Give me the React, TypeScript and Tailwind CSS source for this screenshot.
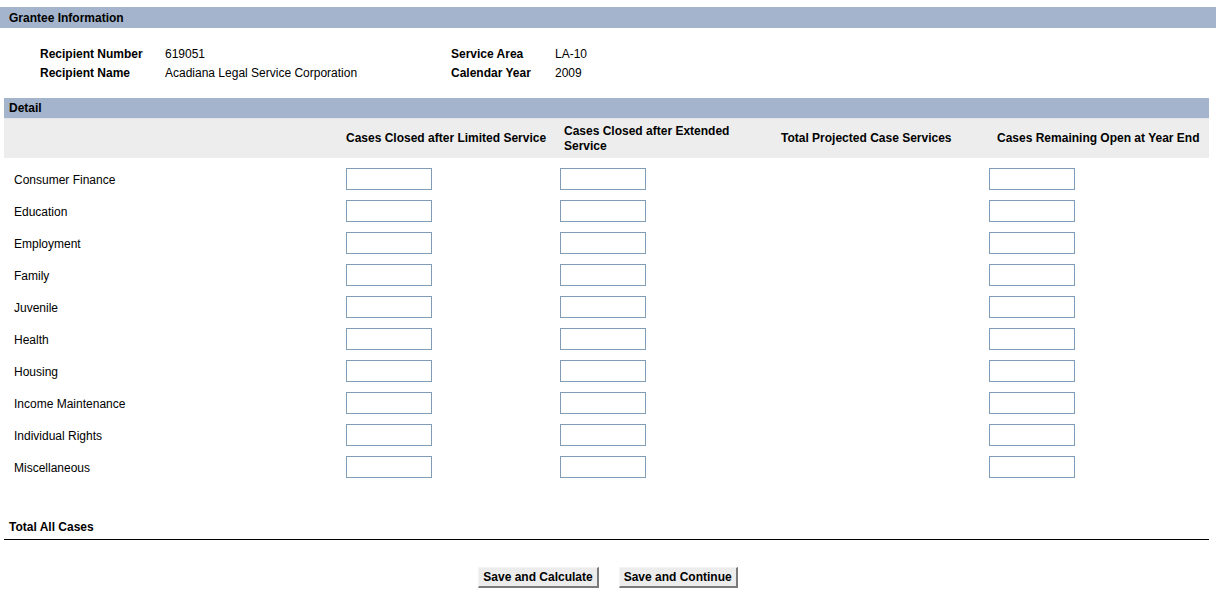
const rows = [
  "Consumer Finance",
  "Education",
  "Employment",
  "Family",
  "Juvenile",
  "Health",
  "Housing",
  "Income Maintenance",
  "Individual Rights",
  "Miscellaneous",
];

const Box = () => (
  <input
    type="text"
    className="w-[86px] h-[22px] border border-[#7f9db9] bg-white outline-none"
  />
);

const Btn = ({ label }: { label: string }) => (
  <button className="h-[21px] px-[4px] bg-[#ececec] border border-t-[#f4f4f4] border-l-[#f4f4f4] border-b-[#7a7a7a] border-r-[#7a7a7a] border-b-2 border-r-2 font-bold text-[12px] text-black leading-none">
    {label}
  </button>
);

export default function App() {
  return (
    <div
      className="w-[1216px] h-[593px] bg-white text-black text-[12px] overflow-hidden"
      style={{ fontFamily: '"Liberation Sans", Arial, sans-serif' }}
    >
      <div className="pt-[7px]">
        <div className="h-[21px] bg-[#a3b4cc] pl-[9px] flex items-center font-bold text-[12px]">
          Grantee Information
        </div>
      </div>

      <div className="grid grid-cols-[125px_286px_104px_1fr] pl-[40px] pt-[19px] gap-y-[5px] leading-[14px]">
        <div className="font-bold">Recipient Number</div>
        <div>619051</div>
        <div className="font-bold">Service Area</div>
        <div>LA-10</div>
        <div className="font-bold">Recipient Name</div>
        <div>Acadiana Legal Service Corporation</div>
        <div className="font-bold">Calendar Year</div>
        <div>2009</div>
      </div>

      <div className="px-[4px] w-[1213px] pt-[18px]">
        <div className="h-[20px] bg-[#a3b4cc] pl-[5px] flex items-center font-bold text-[12px]">
          Detail
        </div>
        <div className="h-px bg-[#e2e6ec]" />
        <div className="grid grid-cols-[342px_214px_217px_212px_1fr] h-[39px] bg-[#ededed] items-center font-bold leading-[15px]">
          <div />
          <div>Cases Closed after Limited Service</div>
          <div className="pl-[4px] max-w-[190px]">Cases Closed after Extended Service</div>
          <div className="pl-[4px]">Total Projected Case Services</div>
          <div className="pl-[8px]">Cases Remaining Open at Year End</div>
        </div>

        <div className="pt-[5px]">
          {rows.map((r) => (
            <div
              key={r}
              className="grid grid-cols-[342px_214px_217px_212px_1fr] h-[32px] items-center"
            >
              <div className="pl-[10px] pt-px">{r}</div>
              <div>
                <Box />
              </div>
              <div>
                <Box />
              </div>
              <div />
              <div>
                <Box />
              </div>
            </div>
          ))}
        </div>

        <div className="pt-[37px] pl-[5px] h-[56px] font-bold leading-[14px]">
          Total All Cases
        </div>
        <div className="h-px bg-black" />
      </div>

      <div className="flex justify-center gap-[20px] pt-[27px]">
        <Btn label="Save and Calculate" />
        <Btn label="Save and Continue" />
      </div>
    </div>
  );
}
